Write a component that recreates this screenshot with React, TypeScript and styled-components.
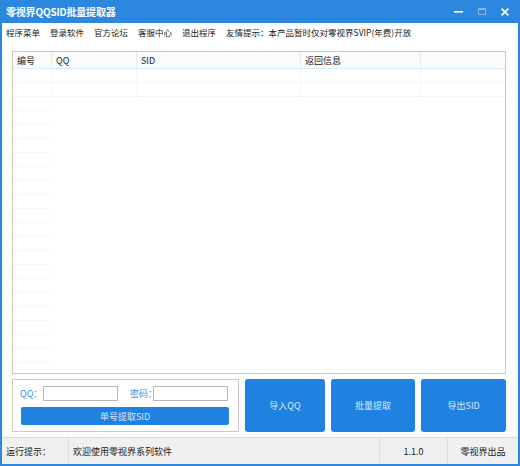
import React from 'react';
import styled, { createGlobalStyle } from 'styled-components';

const GlobalStyle = createGlobalStyle`
  html, body {
    margin: 0;
    padding: 0;
    background: #ffffff;
  }
  * {
    box-sizing: border-box;
  }
`;

const FONT = `"Noto Sans CJK SC", "Microsoft YaHei", "Liberation Sans", sans-serif`;

const menuItems = ['程序菜单', '登录软件', '官方论坛', '客服中心', '退出程序'];
const columns = [
  { title: '编号', width: 39 },
  { title: 'QQ', width: 85 },
  { title: 'SID', width: 164 },
  { title: '返回信息', width: 120 },
  { title: '', width: 0 },
];
const rows = Array.from({ length: 21 }, (_, i) => i);

const App: React.FC = () => {
  return (
    <>
      <GlobalStyle />
      <Window>
        <TitleBar>
          <Title>零视界QQSID批量提取器</Title>
          <Controls>
            <svg width="9" height="2" viewBox="0 0 9 2">
              <rect width="9" height="1.6" fill="#ffffff" />
            </svg>
            <svg width="8" height="7" viewBox="0 0 8 7">
              <rect x="0.5" y="0.5" width="7" height="6" fill="none" stroke="#7fb6ec" strokeWidth="1" />
              <rect x="0.5" y="0.5" width="7" height="1.5" fill="#7fb6ec" />
            </svg>
            <svg width="8" height="8" viewBox="0 0 8 8">
              <path d="M0.6 0.6 L7.4 7.4 M7.4 0.6 L0.6 7.4" stroke="#ffffff" strokeWidth="1.6" />
            </svg>
          </Controls>
        </TitleBar>
        <Client>
          <MenuBar>
            {menuItems.map((m) => (
              <MenuItem key={m}>{m}</MenuItem>
            ))}
            <MenuItem>友情提示：本产品暂时仅对零视界SVIP(年费)开放</MenuItem>
          </MenuBar>
          <Body>
            <ListView>
              <HeaderRow>
                {columns.map((c, i) => (
                  <HeaderCell key={i} $width={c.width} $last={i === columns.length - 1}>
                    {c.title}
                  </HeaderCell>
                ))}
              </HeaderRow>
              {rows.map((r) => (
                <Row key={r}>
                  {columns.map((c, i) => (
                    <Cell
                      key={i}
                      $width={c.width}
                      $last={i === columns.length - 1}
                      $dotted={r < 2 || i === 0}
                      $divider={r < 2}
                    />
                  ))}
                </Row>
              ))}
            </ListView>
            <BottomRow>
              <GroupBox>
                <FieldRow>
                  <Label>QQ：</Label>
                  <Input $width={75} />
                  <Label style={{ marginLeft: 12 }}>密码：</Label>
                  <Input $width={75} />
                </FieldRow>
                <SmallButton>单号提取SID</SmallButton>
              </GroupBox>
              <BigButton $width={80}>导入QQ</BigButton>
              <BigButton $width={85}>批量提取</BigButton>
              <BigButton $width={85}>导出SID</BigButton>
            </BottomRow>
          </Body>
          <StatusBar>
            <StatusCell $width={67}>运行提示：</StatusCell>
            <StatusCell $width={311}>欢迎使用零视界系列软件</StatusCell>
            <StatusCell $width={68} $center>1.1.0</StatusCell>
            <StatusCell $width={0} $center $last>零视界出品</StatusCell>
          </StatusBar>
        </Client>
      </Window>
    </>
  );
};

const Window = styled.div`
  width: 520px;
  height: 466px;
  background: #2b88de;
  padding: 0 2px 2px 2px;
  display: flex;
  flex-direction: column;
  font-family: ${FONT};
`;

const TitleBar = styled.div`
  height: 23px;
  display: flex;
  align-items: center;
  justify-content: space-between;
  padding: 0 9px 0 4px;
`;

const Title = styled.div`
  color: #ffffff;
  font-size: 10px;
  font-weight: bold;
  letter-spacing: -0.2px;
`;

const Controls = styled.div`
  display: flex;
  align-items: center;
  gap: 15px;
`;

const Client = styled.div`
  flex: 1;
  background: #ffffff;
  display: flex;
  flex-direction: column;
`;

const MenuBar = styled.div`
  height: 17px;
  display: flex;
  align-items: center;
  padding-left: 4px;
  gap: 10px;
  background: #ffffff;
`;

const MenuItem = styled.span`
  font-size: 8.5px;
  color: #1a1a1a;
  white-space: nowrap;
`;

const Body = styled.div`
  flex: 1;
  display: flex;
  flex-direction: column;
  padding: 11px 12px 5px 10px;
`;

const ListView = styled.div`
  flex: 1;
  border: 1px solid #c9c9c9;
  overflow: hidden;
  background: #ffffff;
`;

const HeaderRow = styled.div`
  height: 17px;
  display: flex;
  background: #fbfbfb;
  border-bottom: 1px dotted #c7dff3;
`;

const HeaderCell = styled.div<{ $width: number; $last?: boolean }>`
  ${(p) => (p.$last ? 'flex: 1;' : `width: ${p.$width}px;`)}
  border-right: ${(p) => (p.$last ? 'none' : '1px solid #e4e9ee')};
  font-size: 9px;
  color: #222222;
  display: flex;
  align-items: center;
  padding-left: 4px;
`;

const Row = styled.div`
  height: 14px;
  display: flex;
`;

const Cell = styled.div<{ $width: number; $last?: boolean; $dotted?: boolean; $divider?: boolean }>`
  ${(p) => (p.$last ? 'flex: 1;' : `width: ${p.$width}px;`)}
  border-bottom: 1px dotted ${(p) => (p.$dotted ? '#e8edf2' : 'transparent')};
  border-right: 1px dotted ${(p) => (p.$divider && !p.$last ? '#f0f3f6' : 'transparent')};
`;

const BottomRow = styled.div`
  height: 53px;
  margin-top: 5px;
  display: flex;
  gap: 6px;
`;

const GroupBox = styled.div`
  width: 228px;
  border: 1px solid #c9c9c9;
  padding: 6px 9px 6px 7px;
  display: flex;
  flex-direction: column;
  justify-content: space-between;
`;

const FieldRow = styled.div`
  display: flex;
  align-items: center;
`;

const Label = styled.span`
  font-size: 9px;
  color: #3a8fe2;
  width: 23px;
  white-space: nowrap;
`;

const Input = styled.div<{ $width: number }>`
  width: ${(p) => p.$width}px;
  height: 15px;
  border: 1px solid #b8b8b8;
  background: #ffffff;
`;

const SmallButton = styled.div`
  height: 18px;
  margin-left: 1px;
  background: #1f82e0;
  border-radius: 2px;
  color: #dce8fa;
  font-size: 9px;
  display: flex;
  align-items: center;
  justify-content: center;
`;

const BigButton = styled.div<{ $width: number }>`
  width: ${(p) => p.$width}px;
  background: #1f82e0;
  border-radius: 3px;
  color: #dce8fa;
  font-size: 9px;
  display: flex;
  align-items: center;
  justify-content: center;
`;

const StatusBar = styled.div`
  height: 27px;
  display: flex;
  background: #f0f0f0;
  border-top: 1px solid #dadada;
`;

const StatusCell = styled.div<{ $width: number; $center?: boolean; $last?: boolean }>`
  ${(p) => (p.$last ? 'flex: 1;' : `width: ${p.$width}px;`)}
  border-right: ${(p) => (p.$last ? 'none' : '1px solid #dcdcdc')};
  font-size: 9px;
  color: #1a1a1a;
  display: flex;
  align-items: center;
  justify-content: ${(p) => (p.$center ? 'center' : 'flex-start')};
  padding-left: ${(p) => (p.$center ? '0' : '4px')};
`;

export default App;
